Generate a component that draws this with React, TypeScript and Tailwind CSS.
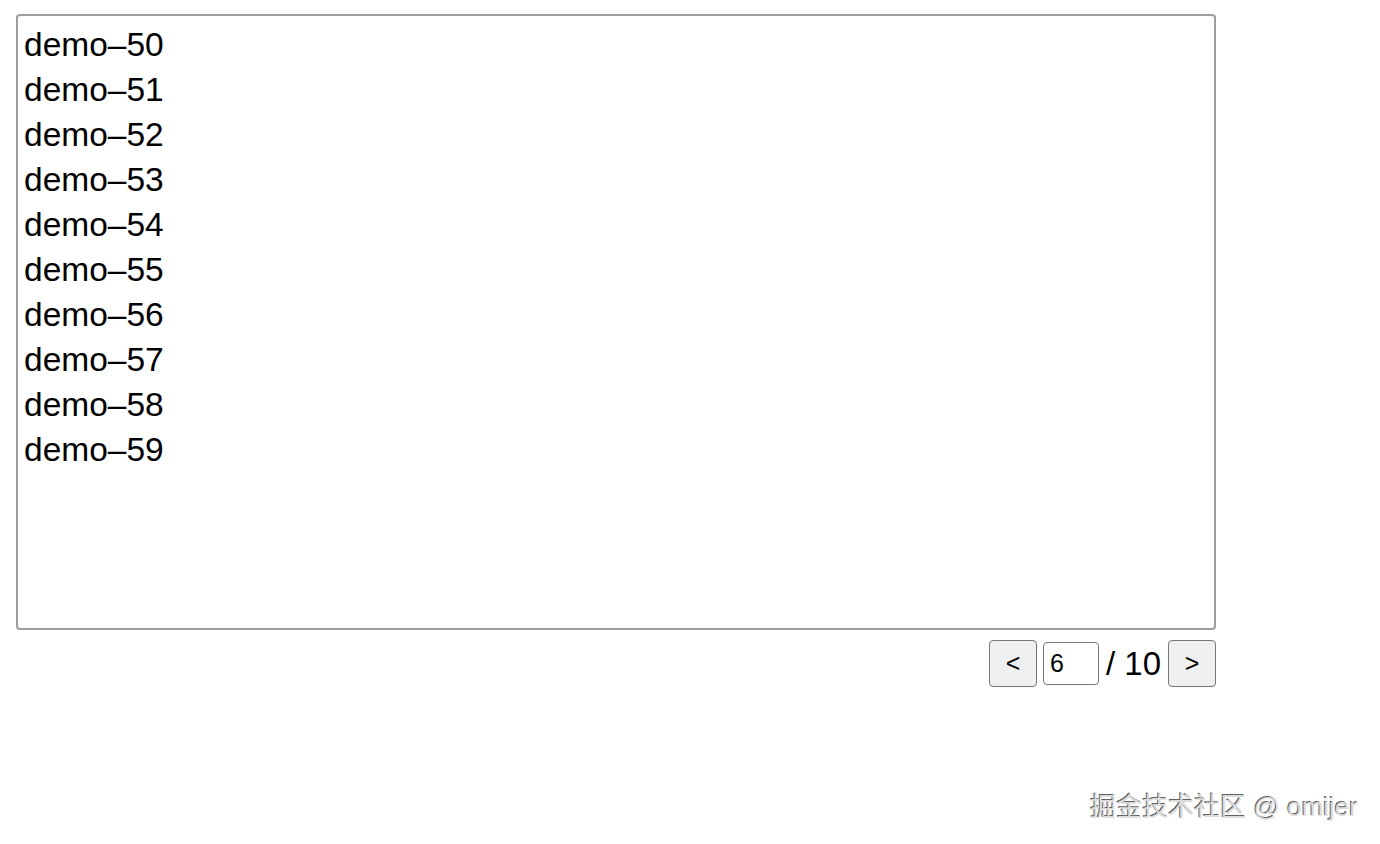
import { useState } from 'react';

const PAGE_SIZE = 10;
const TOTAL_PAGES = 10;

export default function App() {
  const [page, setPage] = useState(6);
  const start = (page - 1) * PAGE_SIZE;
  const items = Array.from({ length: PAGE_SIZE }, (_, i) => `demo–${start + i}`);

  return (
    <div className="relative h-[844px] w-[1380px] bg-white pl-[16px] pt-[14px] font-['Liberation_Sans',Arial,sans-serif] text-black">
      <div className="h-[616px] w-[1200px] rounded-[4px] border-2 border-[#9e9e9e] px-[6px] pt-[6px]">
        {items.map((item) => (
          <div key={item} className="text-[33.5px] leading-[45px]">
            {item}
          </div>
        ))}
      </div>

      <div className="mt-[10px] flex w-[1200px] items-center justify-end">
        <button
          onClick={() => setPage((p) => Math.max(1, p - 1))}
          className="flex h-[47px] w-[48px] items-center justify-center rounded-[4px] border border-[#767676] bg-[#efefef] text-[25px]"
        >
          &lt;
        </button>
        <input
          value={page}
          readOnly
          className="ml-[6px] h-[43px] w-[56px] rounded-[4px] border border-[#767676] px-[6px] text-[25px] outline-none"
        />
        <span className="ml-[7px] mr-[7px] text-[33px] leading-[45px]">/ {TOTAL_PAGES}</span>
        <button
          onClick={() => setPage((p) => Math.min(TOTAL_PAGES, p + 1))}
          className="flex h-[47px] w-[48px] items-center justify-center rounded-[4px] border border-[#767676] bg-[#efefef] text-[25px]"
        >
          &gt;
        </button>
      </div>

      <div className="absolute bottom-[20px] right-[22px] font-['Liberation_Sans','Noto_Sans_CJK_SC',sans-serif] text-[26px] leading-[34px] text-[#dcdcdc] [text-shadow:-1px_-1px_0_#606060,1px_1px_0_#ffffff]">
        掘金技术社区 @ omijer
      </div>
    </div>
  );
}
